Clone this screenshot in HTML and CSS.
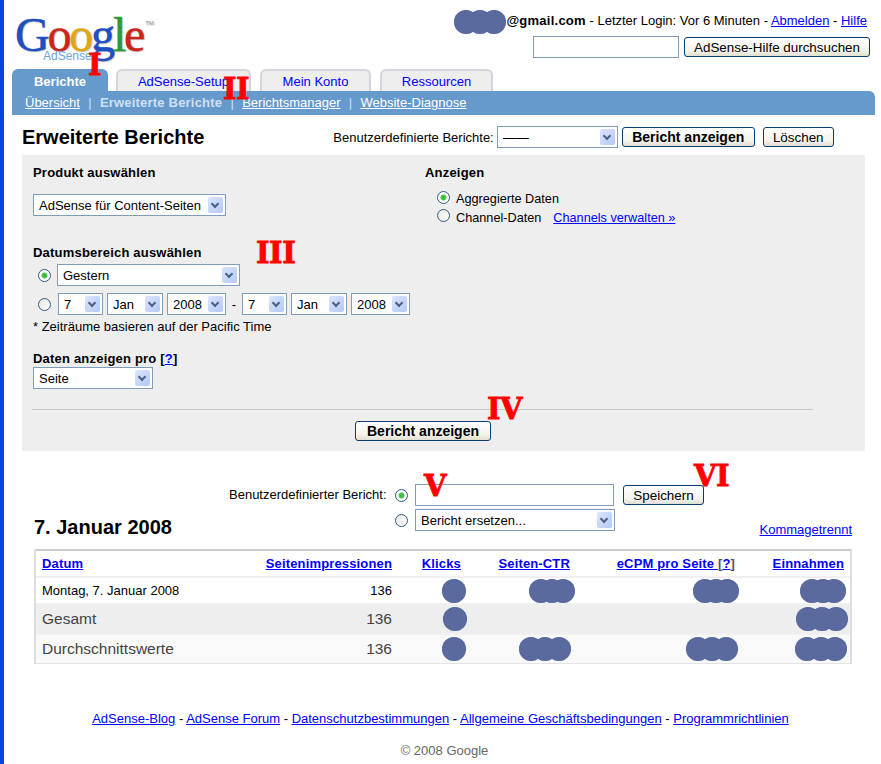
FILE: index.html
```html
<!DOCTYPE html>
<html lang="de">
<head>
  <meta charset="UTF-8">
  <title>Erweiterte Berichte - Google AdSense</title>
  <meta name="viewport" content="width=device-width, initial-scale=1.0">
  <link rel="stylesheet" href="styles.css">
</head>
<body>
  <div class="page">
    <header class="top">
      <div class="logo">
        <div class="logo-word"><span class="c-blue">G</span><span class="c-red">o</span><span class="c-yellow">o</span><span class="c-blue">g</span><span class="c-green">l</span><span class="c-red">e</span><sup class="logo-tm">TM</sup></div>
        <div class="logo-product">AdSense</div>
      </div>
      <div class="account">
        <div class="account-line">
          <span class="blob"><i></i><i></i><i></i></span><b>@gmail.com</b> - Letzter Login: Vor 6 Minuten - <a href="#">Abmelden</a> - <a href="#">Hilfe</a>
        </div>
        <form class="help-search">
          <input type="text" class="field help-field">
          <button type="button" class="btn help-btn">AdSense-Hilfe durchsuchen</button>
        </form>
      </div>
    </header>

    <nav class="tabs">
      <a href="#" class="tab tab-active tab-reports">Berichte</a>
      <a href="#" class="tab tab-setup">AdSense-Setup</a>
      <a href="#" class="tab tab-account">Mein Konto</a>
      <a href="#" class="tab tab-resources">Ressourcen</a>
    </nav>
    <nav class="subnav">
      <a href="#">Übersicht</a><span class="sep">|</span><b>Erweiterte Berichte</b><span class="sep">|</span><a href="#">Berichtsmanager</a><span class="sep">|</span><a href="#">Website-Diagnose</a>
    </nav>

    <div class="title-row">
      <h1>Erweiterte Berichte</h1>
      <div class="saved-reports">
        <span>Benutzerdefinierte Berichte:</span>
        <span class="select w-saved"><select><option>——</option></select></span>
        <button type="button" class="btn btn-strong w-show-small">Bericht anzeigen</button>
        <button type="button" class="btn w-delete">Löschen</button>
      </div>
    </div>

    <section class="panel">
      <div class="panel-cols">
        <div class="panel-left">
          <h2>Produkt auswählen</h2>
          <span class="select w-product"><select><option>AdSense für Content-Seiten</option></select></span>

          <h2 class="date-head">Datumsbereich auswählen</h2>
          <div class="date-row first">
            <input type="radio" name="range" class="radio" checked>
            <span class="select w-range"><select><option>Gestern</option></select></span>
          </div>
          <div class="date-row">
            <input type="radio" name="range" class="radio">
            <span class="select w-day"><select><option>7</option></select></span>
            <span class="select w-month"><select><option>Jan</option></select></span>
            <span class="select w-year"><select><option>2008</option></select></span>
            <span class="dash">-</span>
            <span class="select w-day"><select><option>7</option></select></span>
            <span class="select w-month"><select><option>Jan</option></select></span>
            <span class="select w-year"><select><option>2008</option></select></span>
          </div>
          <p class="note">* Zeiträume basieren auf der Pacific Time</p>

          <h2 class="unit-head">Daten anzeigen pro [<a href="#">?</a>]</h2>
          <span class="select w-unit"><select><option>Seite</option></select></span>
        </div>
        <div class="panel-right">
          <h2>Anzeigen</h2>
          <label class="view-opt"><input type="radio" name="view" class="radio" checked>Aggregierte Daten</label>
          <label class="view-opt second"><input type="radio" name="view" class="radio">Channel-Daten<a href="#" class="channels">Channels verwalten »</a></label>
        </div>
      </div>
      <hr class="panel-rule">
      <div class="panel-submit">
        <button type="button" class="btn btn-strong w-show">Bericht anzeigen</button>
      </div>
    </section>

    <form class="custom">
      <span class="custom-label">Benutzerdefinierter Bericht:</span>
      <div class="custom-rows">
        <div class="custom-row">
          <input type="radio" name="custom" class="radio" checked>
          <input type="text" class="field custom-field">
          <button type="button" class="btn w-save">Speichern</button>
        </div>
        <div class="custom-row second">
          <input type="radio" name="custom" class="radio">
          <span class="select w-replace"><select><option>Bericht ersetzen...</option></select></span>
        </div>
      </div>
    </form>

    <div class="result-head">
      <h1>7. Januar 2008</h1>
      <a href="#">Kommagetrennt</a>
    </div>

    <table class="report">
      <thead>
        <tr>
          <th class="col-date"><a href="#">Datum</a></th>
          <th class="col-views"><a href="#">Seitenimpressionen</a></th>
          <th class="col-clicks"><a href="#">Klicks</a></th>
          <th class="col-ctr"><a href="#">Seiten-CTR</a></th>
          <th class="col-ecpm"><a href="#">eCPM pro Seite </a><span class="help">[<a href="#">?</a>]</span></th>
          <th class="col-income"><a href="#">Einnahmen</a></th>
        </tr>
      </thead>
      <tbody>
        <tr class="row-day">
          <td>Montag, 7. Januar 2008</td>
          <td>136</td>
          <td><span class="blob off-3"><i></i></span></td>
          <td><span class="blob tight off-3"><i></i><i></i><i></i></span></td>
          <td><span class="blob tight off-4"><i></i><i></i><i></i></span></td>
          <td><span class="blob tight off-4"><i></i><i></i><i></i></span></td>
        </tr>
        <tr class="row-total">
          <td>Gesamt</td>
          <td>136</td>
          <td><span class="blob off-2"><i></i></span></td>
          <td></td>
          <td></td>
          <td><span class="blob off-2"><i></i><i></i><i></i></span></td>
        </tr>
        <tr class="row-avg">
          <td>Durchschnittswerte</td>
          <td>136</td>
          <td><span class="blob off-3"><i></i></span></td>
          <td><span class="blob off-7"><i></i><i></i><i></i></span></td>
          <td><span class="blob off-5"><i></i><i></i><i></i></span></td>
          <td><span class="blob off-3"><i></i><i></i><i></i></span></td>
        </tr>
      </tbody>
    </table>

    <footer class="foot">
      <p class="foot-links"><a href="#">AdSense-Blog</a> - <a href="#">AdSense Forum</a> - <a href="#">Datenschutzbestimmungen</a> - <a href="#">Allgemeine Geschäftsbedingungen</a> - <a href="#">Programmrichtlinien</a></p>
      <p class="copyright">© 2008 Google</p>
    </footer>

    <!-- red numerals drawn over the screenshot -->
    <span class="mark mark-1">I</span>
    <span class="mark mark-2">II</span>
    <span class="mark mark-3">III</span>
    <span class="mark mark-4">IV</span>
    <span class="mark mark-5">V</span>
    <span class="mark mark-6">VI</span>
  </div>
</body>
</html>
```

FILE: styles.css
```css
html, body {
  margin: 0;
  padding: 0;
}

body {
  background: #fff;
  color: #000;
  font-family: "Liberation Sans", Arial, sans-serif;
  font-size: 13px;
  overflow: hidden;
}

a {
  color: #00f;
}

h1 {
  margin: 0;
  font-size: 20px;
  line-height: 22px;
}

h2 {
  margin: 0;
  font-size: 13px;
  line-height: 16px;
  letter-spacing: 0.2px;
}

.page {
  position: relative;
  box-sizing: border-box;
  height: 764px;
  border-left: 4px solid #0845e0;
}

/* header */
.top {
  display: flex;
  justify-content: space-between;
  height: 69px;
}

.logo {
  margin: 10px 0 0 11px;
  position: relative;
}

.logo-word {
  font-family: "Liberation Serif", serif;
  font-size: 48px;
  line-height: 50px;
  letter-spacing: -2.2px;
  -webkit-text-stroke: 0.5px;
  text-shadow: 1px 1px 1px #bbb;
}

.logo-tm {
  font-family: "Liberation Sans", sans-serif;
  font-size: 6px;
  letter-spacing: 0;
  -webkit-text-stroke: 0;
  color: #999;
  vertical-align: 26px;
  line-height: 0;
  margin-left: 2px;
}

.logo-product {
  position: absolute;
  top: 39px;
  left: 28px;
  font-size: 12px;
  color: #6ba3dd;
}

.c-blue { color: #1f4fc0; }
.c-red { color: #c9251a; }
.c-yellow { color: #e0a80f; }
.c-green { color: #2b9a3a; }

.account {
  margin: 9px 11px 0 0;
  text-align: right;
}

.account-line {
  height: 24px;
  padding-right: 3px;
  line-height: 24px;
  white-space: nowrap;
}

.account-line b {
  letter-spacing: 0.25px;
}

.help-search {
  display: flex;
  justify-content: flex-end;
  align-items: center;
  gap: 5px;
  margin-top: 3px;
}

.help-field {
  width: 146px;
  height: 22px;
}

.help-btn {
  width: 186px;
}

/* form controls */
.field {
  box-sizing: border-box;
  border: 1px solid #7f9db9;
  background: #fff;
  margin: 0;
  padding: 0 3px;
  font: inherit;
}

.btn {
  box-sizing: border-box;
  height: 20px;
  margin: 0;
  padding: 0;
  border: 1px solid #0b3c70;
  border-radius: 3px;
  background: linear-gradient(#fff, #f4f3ec 70%, #e2dfd2);
  color: #000;
  font: inherit;
  font-size: 13.4px;
}

.btn-strong {
  font-size: 14px;
  font-weight: bold;
}

.select {
  position: relative;
  display: inline-block;
  box-sizing: border-box;
  height: 22px;
  flex: none;
}

.select select {
  box-sizing: border-box;
  width: 100%;
  height: 100%;
  margin: 0;
  padding: 0 20px 0 5px;
  border: 1px solid #7f9db9;
  border-radius: 0;
  background: #fff;
  color: #000;
  font: inherit;
  appearance: none;
}

.select::after {
  content: "";
  position: absolute;
  top: 3px;
  right: 3px;
  bottom: 3px;
  width: 15px;
  border-radius: 2px;
  background: linear-gradient(135deg, #dbe5fd, #b4c8f6);
  pointer-events: none;
}

.select::before {
  content: "";
  position: absolute;
  top: 7px;
  right: 8px;
  width: 4px;
  height: 4px;
  border-right: 2px solid #4d6185;
  border-bottom: 2px solid #4d6185;
  transform: rotate(45deg);
  z-index: 1;
  pointer-events: none;
}

.radio {
  appearance: none;
  box-sizing: border-box;
  width: 13px;
  height: 13px;
  margin: 0;
  flex: none;
  border: 1px solid #2f5a85;
  border-radius: 50%;
  background: linear-gradient(135deg, #e6e6df, #fff);
}

.radio:checked {
  background: radial-gradient(circle, #35b535 0, #4fc44f 2.5px, #fff 3.5px);
}

/* tabs */
.tabs {
  display: flex;
  height: 22px;
  margin-left: 8px;
  align-items: flex-end;
}

.tab {
  box-sizing: border-box;
  height: 22px;
  border: 2px solid #d2d6dc;
  border-bottom: 0;
  border-radius: 6px 6px 0 0;
  background: #eee;
  line-height: 21px;
  text-align: center;
  text-decoration: none;
}

.tab-active {
  border-color: #69c;
  background: #69c;
  color: #fff;
  font-weight: bold;
}

.tab-reports { width: 96px; margin-right: 8px; }
.tab-setup { width: 135px; margin-right: 9px; }
.tab-account { width: 111px; margin-right: 9px; }
.tab-resources { width: 113px; }

.subnav {
  box-sizing: border-box;
  height: 24px;
  margin: 0 6px 0 8px;
  padding-left: 13px;
  border-radius: 0 6px 0 0;
  background: #69c;
  color: #cde0f5;
  line-height: 24px;
  white-space: nowrap;
}

.subnav a {
  color: #fff;
}

.subnav b {
  letter-spacing: 0.2px;
}

.sep {
  margin: 0 8.3px;
}

/* title row */
.title-row {
  display: flex;
  align-items: center;
  height: 40px;
  margin-left: 18px;
}

.title-row h1 {
  margin-top: 4px;
}

.saved-reports {
  display: flex;
  align-items: center;
  margin-left: 129px;
  margin-top: 4px;
}

.w-saved { width: 121px; margin: 0 4px 0 3px; }
.w-show-small { width: 133px; }
.w-delete { width: 71px; margin-left: 8px; }

/* options panel */
.panel {
  box-sizing: border-box;
  height: 296px;
  margin: 0 16px 0 18px;
  padding: 10px 11px 0;
  background: #eee;
}

.panel-cols {
  display: flex;
  height: 224px;
}

.panel-left {
  width: 392px;
}

.w-product {
  display: block;
  width: 193px;
  margin-top: 13px;
}

.date-head {
  margin-top: 29px;
}

.date-row {
  display: flex;
  align-items: center;
  margin-left: 5px;
  margin-top: 7px;
}

.date-row.first {
  margin-top: 3px;
}

.date-row .radio {
  margin-right: 7px;
}

.date-row.first .radio {
  margin-right: 6px;
}

.w-range { width: 183px; }
.w-day { width: 45px; margin-right: 4px; }
.w-month { width: 56px; margin-right: 4px; }
.w-year { width: 59px; }

.dash {
  width: 16px;
  text-align: center;
}

.note {
  margin: 4px 0 0;
  line-height: 16px;
}

.unit-head {
  margin-top: 16px;
}

.w-unit {
  display: block;
  width: 120px;
}

.panel-right h2 {
  margin-bottom: 9px;
}

.view-opt {
  display: flex;
  align-items: center;
  height: 18px;
  margin-left: 12px;
  gap: 6px;
  font-size: 12.7px;
}

.view-opt.second {
  margin-top: 1px;
}

.view-opt .radio {
  margin-top: -3px;
}

.view-opt.second .radio {
  margin-top: -5px;
}

.channels {
  margin-left: 6px;
}

.panel-rule {
  width: 781px;
  height: 1px;
  margin: 20px 0 0 -1px;
  border: 0;
  background: #c8c8c8;
}

.panel-submit {
  margin-top: 11px;
  margin-left: 322px;
}

.w-show {
  width: 136px;
}

/* save as custom report */
.custom {
  display: flex;
  margin: 33px 0 0 225px;
}

.custom-label {
  width: 166px;
  line-height: 22px;
}

.custom-row {
  display: flex;
  align-items: center;
  gap: 7px;
}

.custom-row.second {
  margin-top: 3px;
}

.custom-field {
  width: 199px;
  height: 22px;
}

.w-save {
  width: 81px;
  margin-left: 2px;
}

.w-replace {
  width: 200px;
}

.result-head {
  display: flex;
  justify-content: space-between;
  align-items: flex-end;
  height: 30px;
  margin: -23px 29px 0 30px;
}

.result-head a {
  line-height: 16px;
}

/* report table */
.report {
  width: 818px;
  margin: 11px 0 0 30px;
  border-collapse: separate;
  border-spacing: 0;
  table-layout: fixed;
  border-left: 2px solid #ddd;
  border-right: 2px solid #ddd;
}

.report th {
  box-sizing: border-box;
  height: 27px;
  padding: 0 8px;
  border-top: 2px solid #ccc;
  text-align: right;
  letter-spacing: 0.15px;
}

.report td {
  box-sizing: border-box;
  padding: 0 8px;
  text-align: right;
  border-top: 2px solid #f0f0f0;
  white-space: nowrap;
}

.report th:first-child,
.report td:first-child {
  padding-left: 6px;
  text-align: left;
}

.report th:last-child {
  padding-right: 6px;
}

.col-date { width: 164px; }
.col-views { width: 200px; }
.col-clicks { width: 69px; }
.col-ctr { width: 109px; }
.col-ecpm { width: 165px; }
.col-income { width: 107px; }

.help {
  color: #555;
}

.row-day td {
  height: 27px;
}

.row-total td,
.row-avg td {
  height: 30px;
  color: #444;
  font-size: 15.5px;
}

.row-total td {
  background: #eee;
}

.row-avg td {
  height: 31px;
  background: #f9f9f9;
  border-bottom: 1px solid #e4e4e4;
}

/* blacked out values */
.blob {
  display: inline-flex;
  vertical-align: middle;
  filter: drop-shadow(0 0 0.5px #9aa5c8);
}

.blob i {
  display: block;
  width: 24px;
  height: 24px;
  margin-left: -10px;
  border-radius: 50%;
  background: #5a6a9e;
}

.blob i:first-child {
  margin-left: 0;
}

.blob.tight i {
  margin-left: -13px;
}

.blob.tight i:first-child {
  margin-left: 0;
}

.off-2 { margin-right: -6px; }
.off-3 { margin-right: -5px; }
.off-4 { margin-right: -4px; }
.off-5 { margin-right: -3px; }
.off-7 { margin-right: -1px; }

/* footer */
.foot {
  text-align: center;
  margin-right: 4px;
}

.foot-links {
  margin: 47px 0 0;
  line-height: 16px;
}

.copyright {
  margin: 16px 0 0;
  padding-left: 8px;
  color: #666;
  line-height: 16px;
}

/* numerals */
.mark {
  position: absolute;
  font-family: "DejaVu Serif", serif;
  font-size: 29px;
  font-weight: bold;
  line-height: 30px;
  color: #f00;
  letter-spacing: -0.5px;
  -webkit-text-stroke: 0.8px #f00;
}

.mark-1 { left: 84px; top: 50px; }
.mark-2 { left: 219px; top: 74px; }
.mark-3 { left: 252px; top: 238px; }
.mark-4 { left: 483px; top: 394px; }
.mark-5 { left: 420px; top: 471px; }
.mark-6 { left: 690px; top: 461px; }
```
